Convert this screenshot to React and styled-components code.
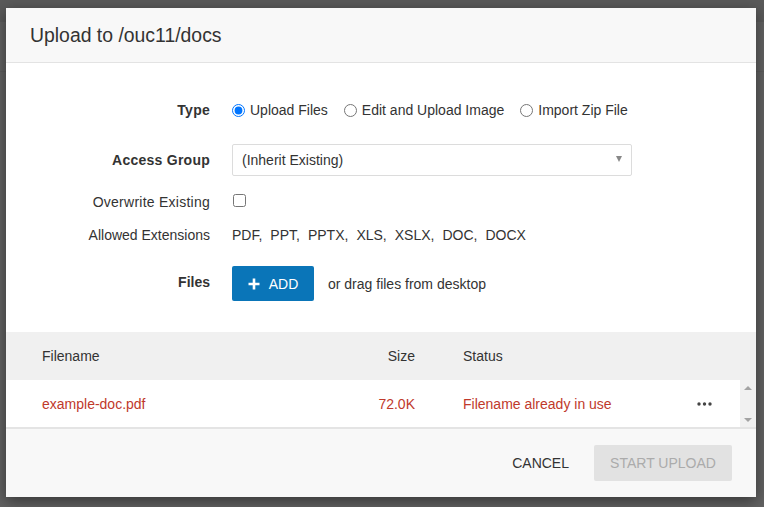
import styled, { createGlobalStyle } from "styled-components";

const blue = "#0a75b8";
const red = "#c0392b";

const Global = createGlobalStyle`
html, body {
  margin: 0;
  padding: 0;
  width: 764px;
  height: 507px;
  overflow: hidden;
  background: #606060;
  font-family: "Liberation Sans", Arial, sans-serif;
  font-size: 14px;
  color: #333;
}
`

const Backdrop = styled.div`
width: 764px;
height: 507px;
box-sizing: border-box;
padding: 8px 0 0 6px;
background: linear-gradient(#5a5a5a 0 22px, #626262 22px 71px, #5c5c5c 71px 72px, #626262 72px);
`

const Dialog = styled.div`
width: 750px;
height: 489px;
background: #fff;
box-shadow: 0 4px 14px rgba(0,0,0,0.45);
display: flex;
flex-direction: column;
`

const Header = styled.div`
height: 54px;
flex: none;
background: #f8f8f8;
border-bottom: 1px solid #e3e3e3;
display: flex;
align-items: center;
padding-left: 24px;
`

const Title = styled.h3`
margin: 0;
font-size: 19.4px;
font-weight: normal;
color: #333;
`

const Body = styled.div`
height: 269px;
flex: none;
padding-top: 31px;
box-sizing: border-box;
`

const Row = styled.div`
display: grid;
grid-template-columns: 204px 1fr;
column-gap: 22px;
align-items: center;
height: ${p => p.$h}px;
margin-top: ${p => p.$mt || 0}px;
`

const Label = styled.div`
text-align: right;
font-weight: ${p => p.$bold ? "bold" : "normal"};
letter-spacing: ${p => p.$ls || 0}px;
color: #333;
`

const Radios = styled.div`
display: flex;
gap: 16px;
`

const RadioLabel = styled.label`
display: flex;
align-items: center;
gap: 5px;
input {
  margin: 0;
  width: 13px;
  height: 13px;
  accent-color: #0075ff;
}
`

const Select = styled.div`
width: 400px;
height: 32px;
box-sizing: border-box;
border: 1px solid #dcdcdc;
border-radius: 2px;
display: flex;
align-items: center;
justify-content: space-between;
padding: 0 9px 0 9px;
`

const Caret = styled.span`
width: 0;
height: 0;
border-left: 3.5px solid transparent;
border-right: 3.5px solid transparent;
border-top: 6px solid #888;
margin-top: -3px;
`

const Check = styled.input`
margin: 0 0 0 1px;
width: 13px;
height: 13px;
`

const Extensions = styled.div`
display: flex;
gap: 8px;
`

const FilesWrap = styled.div`
display: flex;
align-items: center;
gap: 14px;
`

const AddButton = styled.button`
height: 35px;
width: 82px;
border: none;
border-radius: 2px;
background: ${blue};
color: #fff;
font-family: inherit;
font-size: 14px;
display: flex;
align-items: center;
justify-content: center;
gap: 9px;
padding: 0;
`

const Table = styled.div`
flex: none;
`

const Grid = styled.div`
display: grid;
grid-template-columns: 264px 109px 282px 1fr;
align-items: center;
padding-left: 36px;
height: ${p => p.$h}px;
background: ${p => p.$bg};
color: ${p => p.$color || "#333"};
`

const Cell = styled.div`
text-align: ${p => p.$right ? "right" : "left"};
padding-left: ${p => p.$pl || 0}px;
white-space: nowrap;
`

const DataWrap = styled.div`
display: flex;
height: 47px;
border-bottom: 2px solid #e4e4e4;
`

const DataRow = styled(Grid)`
flex: 1;
`

const Scrollbar = styled.div`
width: 16px;
background: #f1f1f1;
display: flex;
flex-direction: column;
justify-content: space-between;
align-items: center;
padding: 6px 0 5px;
box-sizing: border-box;
`

const Arrow = styled.span`
width: 0;
height: 0;
border-left: 4px solid transparent;
border-right: 4px solid transparent;
${p => p.$up ? "border-bottom: 4px solid #a3a3a3;" : "border-top: 4px solid #a3a3a3;"}
`

const Footer = styled.div`
flex: 1;
background: #f8f8f8;
display: flex;
align-items: center;
justify-content: flex-end;
gap: 9px;
padding-right: 24px;
`

const TextButton = styled.button`
border: none;
background: transparent;
font-family: inherit;
font-size: 14px;
color: #333;
height: 36px;
padding: 0 16px;
`

const PrimaryButton = styled.button`
border: none;
border-radius: 2px;
background: #e2e2e2;
color: #ababab;
font-family: inherit;
font-size: 14px;
width: 138px;
height: 36px;
padding: 0;
`

const extensions = ["PDF,", "PPT,", "PPTX,", "XLS,", "XSLX,", "DOC,", "DOCX"];

export default function App() {
  return (
    <>
      <Global />
      <Backdrop>
        <Dialog>
          <Header>
            <Title>Upload to /ouc11/docs</Title>
          </Header>
          <Body>
            <Row $h={32}>
              <Label $bold $ls={0.25}>Type</Label>
              <Radios>
                <RadioLabel><input type="radio" name="t" defaultChecked />Upload Files</RadioLabel>
                <RadioLabel><input type="radio" name="t" />Edit and Upload Image</RadioLabel>
                <RadioLabel><input type="radio" name="t" />Import Zip File</RadioLabel>
              </Radios>
            </Row>
            <Row $h={32} $mt={18}>
              <Label $bold $ls={0.25}>Access Group</Label>
              <Select>
                <span>(Inherit Existing)</span>
                <Caret />
              </Select>
            </Row>
            <Row $h={28} $mt={12}>
              <Label $ls={0.25}>Overwrite Existing</Label>
              <div><Check type="checkbox" /></div>
            </Row>
            <Row $h={28} $mt={5}>
              <Label>Allowed Extensions</Label>
              <Extensions>
                {extensions.map(e => <span key={e}>{e}</span>)}
              </Extensions>
            </Row>
            <Row $h={35} $mt={17}>
              <Label $bold style={{ marginTop: -4 }}>Files</Label>
              <FilesWrap>
                <AddButton>
                  <svg width="12" height="12" viewBox="0 0 12 12">
                    <path d="M6 0.5v11M0.5 6h11" stroke="#fff" strokeWidth="2.6" />
                  </svg>
                  ADD
                </AddButton>
                <span>or drag files from desktop</span>
              </FilesWrap>
            </Row>
          </Body>
          <Table>
            <Grid $h={48} $bg="#f0f0f0">
              <Cell>Filename</Cell>
              <Cell $right>Size</Cell>
              <Cell $pl={48}>Status</Cell>
              <Cell />
            </Grid>
            <DataWrap>
              <DataRow $h={47} $bg="#fff" $color={red}>
                <Cell>example-doc.pdf</Cell>
                <Cell $right>72.0K</Cell>
                <Cell $pl={48}>Filename already in use</Cell>
                <Cell>
                  <svg width="15" height="4" viewBox="0 0 15 4" style={{ display: "block" }}>
                    <circle cx="2" cy="2" r="1.7" fill="#444" />
                    <circle cx="7.5" cy="2" r="1.7" fill="#444" />
                    <circle cx="13" cy="2" r="1.7" fill="#444" />
                  </svg>
                </Cell>
              </DataRow>
              <Scrollbar>
                <Arrow $up />
                <Arrow />
              </Scrollbar>
            </DataWrap>
          </Table>
          <Footer>
            <TextButton>CANCEL</TextButton>
            <PrimaryButton>START UPLOAD</PrimaryButton>
          </Footer>
        </Dialog>
      </Backdrop>
    </>
  );
}
